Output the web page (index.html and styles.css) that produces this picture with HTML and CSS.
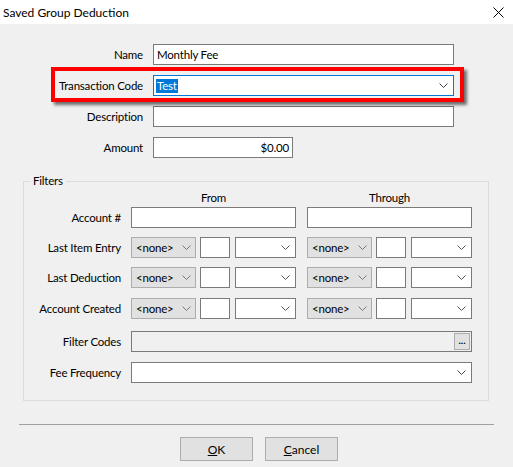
FILE: index.html
```html
<!DOCTYPE html>
<html lang="en">
<head>
  <meta charset="UTF-8">
  <title>Saved Group Deduction</title>
  <link rel="stylesheet" href="styles.css">
</head>
<body>
<div class="window">
  <div class="titlebar">
    <span class="title">Saved Group Deduction</span>
    <svg class="close" width="11" height="11" viewBox="0 0 11 11"><path d="M0.5 0.5 L10.5 10.5 M10.5 0.5 L0.5 10.5" stroke="#000" stroke-width="1" fill="none"/></svg>
  </div>

  <div class="client">
    <!-- top fields -->
    <div class="form">
      <div class="row">
        <span class="lbl">Name</span>
        <div class="field w300">Monthly Fee</div>
      </div>
      <div class="row">
        <span class="lbl">Transaction Code</span>
        <div class="field w300 select focused"><span class="sel">Test</span><svg class="chev" width="9" height="5" viewBox="0 0 9 5"><path d="M0.5 0.5 L4.5 4.5 L8.5 0.5" stroke="#444" fill="none"/></svg></div>
      </div>
      <div class="row">
        <span class="lbl">Description</span>
        <div class="field w300"></div>
      </div>
      <div class="row">
        <span class="lbl">Amount</span>
        <div class="field amount">$0.00</div>
      </div>
    </div>

    <div class="callout"></div>

    <!-- filters group box -->
    <fieldset class="group">
      <legend>Filters</legend>
      <div class="frow head">
        <span class="flbl"></span>
        <span class="col">From</span>
        <span class="col thru">Through</span>
      </div>
      <div class="frow">
        <span class="flbl">Account #</span>
        <div class="field col"></div>
        <div class="field col thru"></div>
      </div>
      <div class="frow">
        <span class="flbl">Last Item Entry</span>
        <div class="col split">
          <div class="combo none">&lt;none&gt;<svg class="chev" width="9" height="5" viewBox="0 0 9 5"><path d="M0.5 0.5 L4.5 4.5 L8.5 0.5" stroke="#777" fill="none"/></svg></div>
          <div class="field num"></div>
          <div class="field select unit"><svg class="chev" width="9" height="5" viewBox="0 0 9 5"><path d="M0.5 0.5 L4.5 4.5 L8.5 0.5" stroke="#555" fill="none"/></svg></div>
        </div>
        <div class="col split thru">
          <div class="combo none">&lt;none&gt;<svg class="chev" width="9" height="5" viewBox="0 0 9 5"><path d="M0.5 0.5 L4.5 4.5 L8.5 0.5" stroke="#777" fill="none"/></svg></div>
          <div class="field num"></div>
          <div class="field select unit"><svg class="chev" width="9" height="5" viewBox="0 0 9 5"><path d="M0.5 0.5 L4.5 4.5 L8.5 0.5" stroke="#555" fill="none"/></svg></div>
        </div>
      </div>
      <div class="frow">
        <span class="flbl">Last Deduction</span>
        <div class="col split">
          <div class="combo none">&lt;none&gt;<svg class="chev" width="9" height="5" viewBox="0 0 9 5"><path d="M0.5 0.5 L4.5 4.5 L8.5 0.5" stroke="#777" fill="none"/></svg></div>
          <div class="field num"></div>
          <div class="field select unit"><svg class="chev" width="9" height="5" viewBox="0 0 9 5"><path d="M0.5 0.5 L4.5 4.5 L8.5 0.5" stroke="#555" fill="none"/></svg></div>
        </div>
        <div class="col split thru">
          <div class="combo none">&lt;none&gt;<svg class="chev" width="9" height="5" viewBox="0 0 9 5"><path d="M0.5 0.5 L4.5 4.5 L8.5 0.5" stroke="#777" fill="none"/></svg></div>
          <div class="field num"></div>
          <div class="field select unit"><svg class="chev" width="9" height="5" viewBox="0 0 9 5"><path d="M0.5 0.5 L4.5 4.5 L8.5 0.5" stroke="#555" fill="none"/></svg></div>
        </div>
      </div>
      <div class="frow wide-gap">
        <span class="flbl">Account Created</span>
        <div class="col split">
          <div class="combo none">&lt;none&gt;<svg class="chev" width="9" height="5" viewBox="0 0 9 5"><path d="M0.5 0.5 L4.5 4.5 L8.5 0.5" stroke="#777" fill="none"/></svg></div>
          <div class="field num"></div>
          <div class="field select unit"><svg class="chev" width="9" height="5" viewBox="0 0 9 5"><path d="M0.5 0.5 L4.5 4.5 L8.5 0.5" stroke="#555" fill="none"/></svg></div>
        </div>
        <div class="col split thru">
          <div class="combo none">&lt;none&gt;<svg class="chev" width="9" height="5" viewBox="0 0 9 5"><path d="M0.5 0.5 L4.5 4.5 L8.5 0.5" stroke="#777" fill="none"/></svg></div>
          <div class="field num"></div>
          <div class="field select unit"><svg class="chev" width="9" height="5" viewBox="0 0 9 5"><path d="M0.5 0.5 L4.5 4.5 L8.5 0.5" stroke="#555" fill="none"/></svg></div>
        </div>
      </div>
      <div class="frow codes">
        <span class="flbl">Filter Codes</span>
        <div class="field full readonly"><span class="dots">...</span></div>
      </div>
      <div class="frow wide-gap">
        <span class="flbl">Fee Frequency</span>
        <div class="field full select"><svg class="chev" width="9" height="5" viewBox="0 0 9 5"><path d="M0.5 0.5 L4.5 4.5 L8.5 0.5" stroke="#444" fill="none"/></svg></div>
      </div>
    </fieldset>

    <div class="sep"></div>

    <div class="buttons">
      <button class="btn"><u>O</u>K</button>
      <button class="btn"><u>C</u>ancel</button>
    </div>
  </div>
</div>
</body>
</html>
```

FILE: styles.css
```css
body {
  margin: 0;
  font-family: Lato, "Liberation Sans", sans-serif;
  font-size: 11.5px;
  letter-spacing: -0.2px;
  color: #000;
}
.window {
  position: relative;
  width: 513px;
  height: 467px;
  background-color: #f0f0f0;
  overflow: hidden;
}
.titlebar {
  height: 24px;
  background-color: #fff;
  display: flex;
  align-items: center;
  justify-content: space-between;
  padding: 0 9px 0 3px;
}
.title {
  font-size: 12px;
  letter-spacing: 0;
}

/* top fields */
.form {
  padding-top: 20px;
  display: flex;
  flex-direction: column;
  gap: 10px;
}
.row {
  display: flex;
  align-items: center;
  gap: 10px;
  height: 21px;
}
.lbl {
  width: 143px;
  text-align: right;
}
.field {
  box-sizing: border-box;
  height: 21px;
  border: 1px solid #7a7a7a;
  background-color: #fff;
  padding: 0 3px;
  display: flex;
  align-items: center;
}
.w300 {
  width: 301px;
}
.amount {
  width: 140px;
  justify-content: flex-end;
}
.select {
  justify-content: space-between;
}
.select .chev {
  margin-left: auto;
  margin-right: 2px;
}
.focused {
  border-color: #0078d7;
  padding-left: 2px;
}
.sel {
  background-color: #0078d7;
  color: #fff;
  padding: 0 1px;
  line-height: 14px;
}

/* red marker round the transaction code row */
.callout {
  position: absolute;
  left: 51px;
  top: 67px;
  width: 413px;
  height: 35px;
  box-sizing: border-box;
  border: 4px solid #ff0000;
  box-shadow: 3px 3px 3px rgba(0, 0, 0, 0.55);
}

/* filters */
.group {
  margin: 16px 0 0 23px;
  width: 466px;
  box-sizing: border-box;
  height: 227px;
  border: 1px solid #dcdcdc;
  padding: 0;
}
.group legend {
  margin-left: 7px;
  padding: 0 3px 0 2px;
  line-height: 14px;
}
.frow {
  display: flex;
  align-items: center;
  height: 21px;
  margin-top: 9px;
}
.frow.head {
  height: 14px;
  margin-top: 2px;
}
.frow.head + .frow {
  margin-top: 3px;
}
.frow.wide-gap {
  margin-top: 10px;
}
.frow.codes {
  margin-top: 12px;
}
.flbl {
  width: 97px;
  margin-right: 10px;
  text-align: right;
}
.col {
  width: 165px;
  text-align: center;
}
.thru {
  margin-left: 11px;
}
.split {
  display: flex;
  gap: 4px;
}
.combo {
  box-sizing: border-box;
  width: 65px;
  height: 21px;
  background-color: #e1e1e1;
  border: 1px solid #adadad;
  display: flex;
  align-items: center;
  justify-content: space-between;
  padding: 0 4px 0 4px;
}
.num {
  width: 30px;
}
.unit {
  width: 61px;
  margin-left: 1px;
}
.full {
  width: 341px;
}
.readonly {
  background-color: #f0f0f0;
  justify-content: flex-end;
  padding: 0;
}
.dots {
  box-sizing: border-box;
  width: 16px;
  height: 17px;
  margin-right: 1px;
  background-color: #e1e1e1;
  border: 1px solid #adadad;
  font-size: 10px;
  font-weight: bold;
  line-height: 12px;
  text-align: center;
  letter-spacing: 0;
}

/* dialog footer */
.sep {
  margin: 23px 19px 0 19px;
  height: 1px;
  background-color: #a0a0a0;
}
.buttons {
  display: flex;
  justify-content: center;
  gap: 12px;
  margin-top: 12px;
  padding-left: 5px;
}
.btn {
  width: 73px;
  height: 24px;
  background-color: #e1e1e1;
  border: 1px solid #adadad;
  font-family: Lato, "Liberation Sans", sans-serif;
  font-size: 12px;
  color: #000;
  padding: 0;
}
```
